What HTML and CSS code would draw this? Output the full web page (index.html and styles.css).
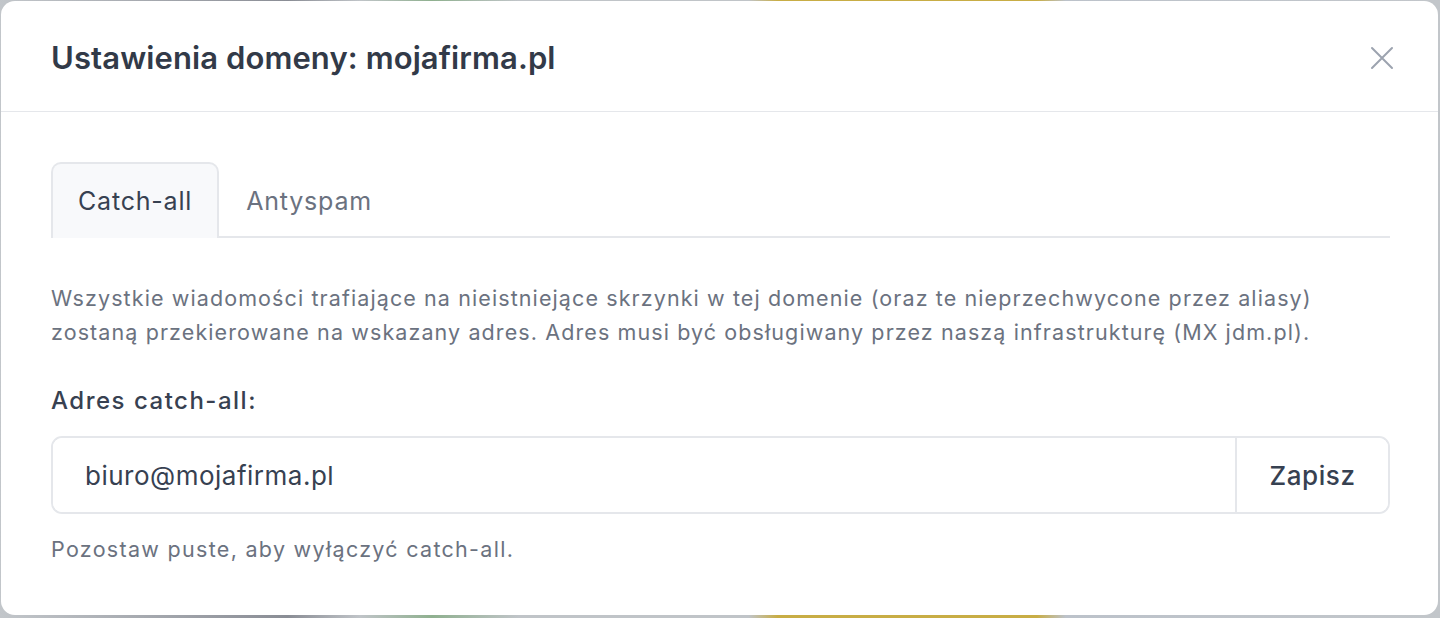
FILE: index.html
```html
<!DOCTYPE html>
<html lang="pl">
<head>
    <meta charset="UTF-8">
    <meta name="viewport" content="width=device-width, initial-scale=1.0">
    <title>Ustawienia domeny</title>
    <link rel="stylesheet" href="styles.css">
</head>
<body>
    <div class="backdrop">
        <div class="modal">
            <header class="modal-header">
                <h1>Ustawienia domeny: mojafirma.pl</h1>
                <button class="close" aria-label="Zamknij">
                    <svg width="24" height="24" viewBox="0 0 24 24" fill="none" stroke="currentColor" stroke-width="2" stroke-linecap="round">
                        <path d="M2 2L22 22M22 2L2 22"/>
                    </svg>
                </button>
            </header>
            <div class="modal-body">
                <ul class="tabs">
                    <li class="tab active">Catch-all</li>
                    <li class="tab">Antyspam</li>
                </ul>
                <p class="desc">Wszystkie wiadomości trafiające na nieistniejące skrzynki w tej domenie (oraz te nieprzechwycone przez aliasy) zostaną przekierowane na wskazany adres. Adres musi być obsługiwany przez naszą infrastrukturę (MX jdm.pl).</p>
                <label class="field-label" for="catchall">Adres catch-all:</label>
                <div class="input-group">
                    <input type="text" id="catchall" value="biuro@mojafirma.pl">
                    <button class="save">Zapisz</button>
                </div>
                <p class="hint">Pozostaw puste, aby wyłączyć catch-all.</p>
            </div>
        </div>
    </div>
</body>
</html>
```

FILE: styles.css
```css
html, body {
    margin: 0;
    height: 100%;
}

body {
    font-family: Inter, "Noto Sans", sans-serif;
    background: linear-gradient(90deg, #c2c6ca 0%, #8a8d95 20%, #c0c4c8 25%, #8fb08f 30%, #c0c4c8 36%, #c0c4c8 52%, #c8ad45 54%, #c8ad45 72%, #bcc2ca 74%, #c2c6ca 100%);
    overflow: hidden;
}

.backdrop {
    height: 100%;
    box-sizing: border-box;
    padding: 1px 2px 3px 1px;
}

.modal {
    height: 100%;
    background: #fff;
    border-radius: 14px;
    display: flex;
    flex-direction: column;
}

.modal-header {
    display: flex;
    align-items: center;
    justify-content: space-between;
    height: 111px;
    box-sizing: border-box;
    padding: 3px 44px 0 50px;
    border-bottom: 1px solid #e5e7eb;
}

.modal-header h1 {
    margin: 0;
    font-size: 31px;
    font-weight: 600;
    color: #323a48;
    letter-spacing: 0.1px;
}

.close {
    border: none;
    background: none;
    padding: 0;
    color: #9ca3af;
    cursor: pointer;
    display: flex;
}

.modal-body {
    padding: 50px 48px 0 50px;
}

.tabs {
    list-style: none;
    margin: 0;
    padding: 0;
    display: flex;
    border-bottom: 2px solid #e5e7eb;
}

.tab {
    font-size: 25px;
    letter-spacing: 0.8px;
    color: #6b7280;
    padding: 22px 25px;
    line-height: 30px;
    border: 2px solid transparent;
    border-bottom: none;
    border-radius: 10px 10px 0 0;
    margin-bottom: -2px;
}

.tab.active {
    color: #374151;
    background: #f8f9fb;
    border-color: #e5e7eb;
}

.desc {
    margin: 43px 0 0;
    font-size: 21.5px;
    letter-spacing: 1.1px;
    line-height: 34px;
    color: #6b7280;
}

.field-label {
    display: block;
    margin-top: 37px;
    font-size: 24px;
    letter-spacing: 1.5px;
    font-weight: 500;
    color: #374151;
}

.input-group {
    display: flex;
    margin-top: 21px;
    height: 78px;
    box-sizing: border-box;
    border: 2px solid #e5e7eb;
    border-radius: 11px;
    overflow: hidden;
}

.input-group input {
    flex: 1;
    border: none;
    outline: none;
    padding: 0 32px;
    font-family: inherit;
    font-size: 26px;
    letter-spacing: 0.5px;
    color: #374151;
    background: #fff;
}

.save {
    border: none;
    border-left: 2px solid #e5e7eb;
    background: #fff;
    width: 153px;
    font-family: inherit;
    font-size: 26px;
    letter-spacing: 0.6px;
    font-weight: 500;
    color: #374151;
    cursor: pointer;
}

.hint {
    margin: 22px 0 0;
    font-size: 21.5px;
    letter-spacing: 1.3px;
    color: #6b7280;
}
```
